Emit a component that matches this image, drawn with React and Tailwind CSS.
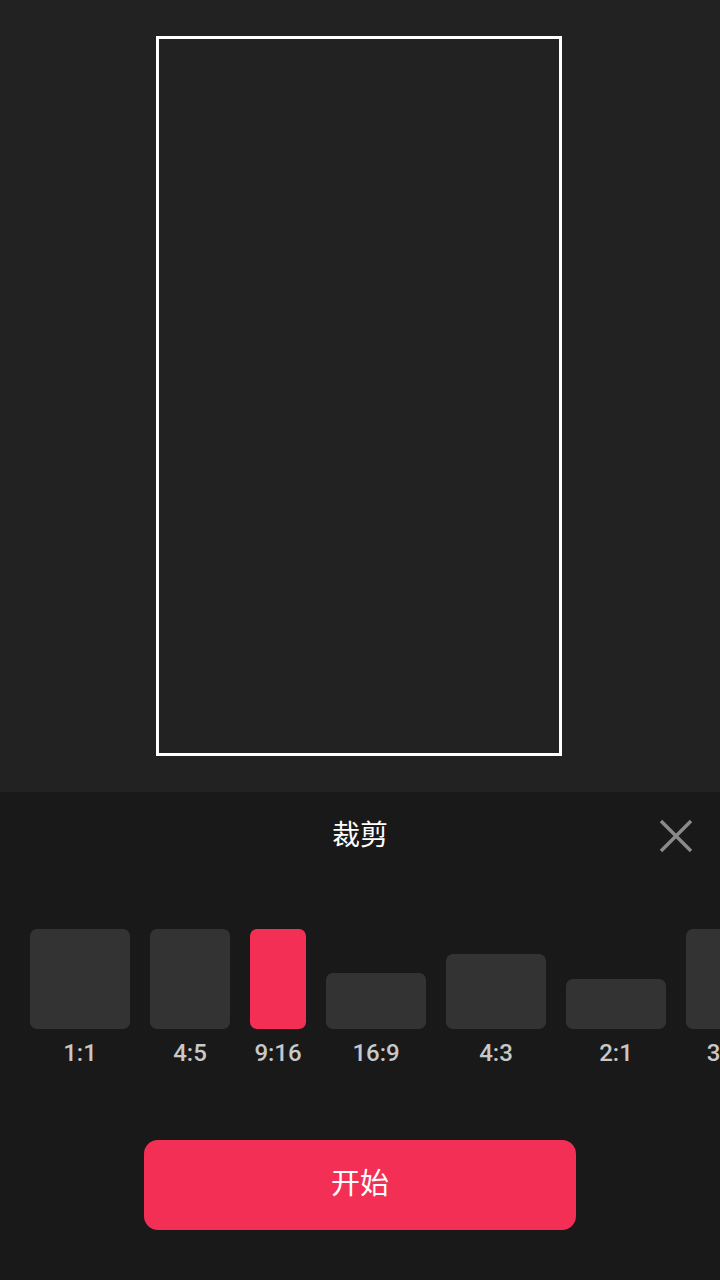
import React from 'react';

const ratios = [
    { label: '1:1', w: 100, h: 100 },
    { label: '4:5', w: 80, h: 100 },
    { label: '9:16', w: 56, h: 100, active: true },
    { label: '16:9', w: 100, h: 56 },
    { label: '4:3', w: 100, h: 75 },
    { label: '2:1', w: 100, h: 50 },
    { label: '3:4', w: 75, h: 100 },
];

const App = () => {
    return (
        <div className="w-[720px] h-[1280px] flex flex-col overflow-hidden bg-[#191919]" style={{ fontFamily: 'Roboto, "Noto Sans CJK SC", sans-serif' }}>
            {/* preview */}
            <div className="h-[792px] bg-[#222222] pt-[36px]">
                <div className="ml-[156px] w-[406px] h-[720px] border-[3px] border-white" />
            </div>

            {/* bottom sheet */}
            <div className="flex-1 flex flex-col">
                <div className="relative h-[88px] flex items-center justify-center">
                    <span className="text-[28px] leading-[32px] text-white">裁剪</span>
                    <button className="absolute right-[26px] top-[26px] w-[36px] h-[36px] flex items-center justify-center">
                        <svg width="34" height="34" viewBox="0 0 34 34" fill="none">
                            <path d="M2 2L32 32M32 2L2 32" stroke="#8a8a8a" strokeWidth="3.5" />
                        </svg>
                    </button>
                </div>

                <div className="mt-[49px] flex gap-[20px] pl-[30px] overflow-hidden">
                    {ratios.map((r) => (
                        <div key={r.label} className="flex flex-col items-center shrink-0" style={{ width: r.w }}>
                            <div className="h-[100px] w-full flex items-end">
                                <div
                                    className={r.active ? 'w-full rounded-[7px] bg-[#f32f56]' : 'w-full rounded-[7px] bg-[#333333]'}
                                    style={{ height: r.h }}
                                />
                            </div>
                            <div className="mt-[10px] text-[24px] leading-[28px] font-medium text-[#c8c8c8] whitespace-nowrap">
                                {r.label}
                            </div>
                        </div>
                    ))}
                </div>

                <div className="mt-[73px] flex justify-center">
                    <button className="w-[432px] h-[90px] rounded-[14px] bg-[#f32f56] text-white text-[29px]">
                        开始
                    </button>
                </div>
            </div>
        </div>
    );
};

export default App;
